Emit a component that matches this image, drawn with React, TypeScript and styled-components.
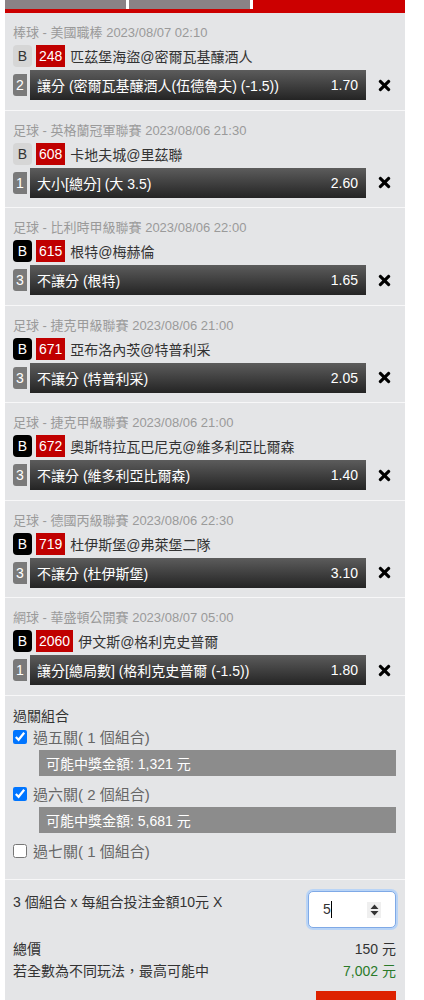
import React from "react"
import styled, { createGlobalStyle } from "styled-components"
import { FaTimes } from "react-icons/fa"

const GlobalStyle = createGlobalStyle`
  body {
    margin: 0;
    background: #fff;
    font-family: "Liberation Sans", "Noto Sans CJK TC", sans-serif;
  }
`

const Panel = styled.div`
  width: 400px;
  margin-left: 5px;
  background: #e4e5e7;
  color: #333;
  font-size: 14px;
`

const Tabs = styled.div`
  display: flex;
  gap: 3px;
  height: 9px;
  border-bottom: 4px solid #cc0000;
  background: #fff;
`

const Tab = styled.div<{ $active?: boolean }>`
  flex: ${(p) => (p.$active ? "1" : "0 0 121px")};
  background: ${(p) => (p.$active ? "#cc0000" : "#8a8286")};
`

const BetItem = styled.div`
  padding: 10px 0 9.5px 8px;
  border-bottom: 1px solid #f7f7f8;
  display: flex;
  flex-direction: column;
`

const League = styled.div`
  height: 20px;
  line-height: 20px;
  font-size: 13px;
  color: #9a9a9a;
  margin-bottom: 2px;
`

const MatchRow = styled.div`
  display: flex;
  align-items: center;
  height: 22px;
  margin-bottom: 3px;
`

const TypeBadge = styled.span<{ $dark?: boolean }>`
  width: 19px;
  height: 22px;
  border-radius: 4px;
  display: flex;
  align-items: center;
  justify-content: center;
  font-size: 14px;
  background: ${(p) => (p.$dark ? "#000" : "#d6d6d6")};
  color: ${(p) => (p.$dark ? "#fff" : "#333")};
  margin-right: 4px;
`

const GameNo = styled.span`
  height: 22px;
  padding: 0 3px;
  background: #c00000;
  color: #fff;
  display: flex;
  align-items: center;
  font-size: 14px;
  margin-right: 5px;
`

const Teams = styled.span`
  font-size: 14px;
  color: #333;
`

const PickRow = styled.div`
  display: flex;
  align-items: center;
  height: 30px;
`

const Qty = styled.span`
  width: 14px;
  height: 22px;
  border-radius: 3px 0 0 3px;
  background: #7a7a7a;
  color: #fff;
  display: flex;
  align-items: center;
  justify-content: center;
  font-size: 14px;
  margin-right: 3px;
`

const PickBar = styled.div`
  width: 336px;
  height: 30px;
  box-sizing: border-box;
  padding: 0 8px 0 7px;
  display: flex;
  align-items: center;
  justify-content: space-between;
  background: linear-gradient(#5c5c5c, #242424);
  color: #fff;
  font-size: 14px;
`

const Remove = styled.span`
  margin-left: 10px;
  display: flex;
  align-items: center;
  color: #000;
  font-size: 17px;
`

const ComboSection = styled.div`
  padding: 10px 9px 18px 8px;
  border-bottom: 1px solid #f7f7f8;
  display: flex;
  flex-direction: column;
`

const Title = styled.div`
  height: 20px;
  line-height: 20px;
  font-size: 14px;
  color: #333;
`

const CheckRow = styled.label`
  display: flex;
  align-items: center;
  height: 20px;
  gap: 6px;
  font-size: 15px;
  color: #666;
  margin-top: 8px;
  &:first-of-type {
    margin-top: 1px;
  }
`

const Check = styled.input`
  width: 14px;
  height: 14px;
  margin: 0;
`

const PrizeBox = styled.div`
  margin: 3px 0 0 26px;
  height: 26px;
  padding-left: 7px;
  display: flex;
  align-items: center;
  background: #8c8c8c;
  color: #fff;
  font-size: 14px;
`

const StakeSection = styled.div`
  padding: 11px 9px 0 8px;
  display: flex;
  flex-direction: column;
`

const StakeRow = styled.div`
  display: flex;
  justify-content: space-between;
  align-items: flex-start;
  margin-bottom: 9px;
`

const StakeText = styled.div`
  font-size: 14px;
  color: #333;
  line-height: 20px;
  padding-top: 1px;
`

const NumberBox = styled.div`
  position: relative;
  width: 88px;
  height: 37px;
  box-sizing: border-box;
  border: 1px solid #7fa9e6;
  border-radius: 5px;
  background: #fff;
  box-shadow: 0 0 0 2px #b9d4f6;
  display: flex;
  align-items: center;
  padding-left: 14px;
  font-size: 14px;
  color: #333;
`

const Caret = styled.span`
  width: 1px;
  height: 17px;
  background: #000;
`

const Spinner = styled.span`
  position: absolute;
  right: 14px;
  top: 10px;
  width: 14px;
  height: 16px;
  background: #efefef;
  display: flex;
  align-items: center;
  justify-content: center;
`

const SumRow = styled.div<{ $green?: boolean }>`
  display: flex;
  justify-content: space-between;
  height: 22px;
  align-items: center;
  font-size: 14px;
  color: #333;
  & > span:last-child {
    color: ${(p) => (p.$green ? "#2a7a2a" : "#333")};
  }
`

const ActionRow = styled.div`
  display: flex;
  justify-content: flex-end;
  margin-top: 10px;
`

const SubmitButton = styled.div`
  width: 80px;
  height: 30px;
  background: #dd2200;
`

const bets = [
  { league: "棒球 - 美國職棒 2023/08/07 02:10", dark: false, no: "248", teams: "匹茲堡海盜@密爾瓦基釀酒人", qty: 2, pick: "讓分 (密爾瓦基釀酒人(伍德魯夫) (-1.5))", odds: "1.70" },
  { league: "足球 - 英格蘭冠軍聯賽 2023/08/06 21:30", dark: false, no: "608", teams: "卡地夫城@里茲聯", qty: 1, pick: "大小[總分] (大 3.5)", odds: "2.60" },
  { league: "足球 - 比利時甲級聯賽 2023/08/06 22:00", dark: true, no: "615", teams: "根特@梅赫倫", qty: 3, pick: "不讓分 (根特)", odds: "1.65" },
  { league: "足球 - 捷克甲級聯賽 2023/08/06 21:00", dark: true, no: "671", teams: "亞布洛內茨@特普利采", qty: 3, pick: "不讓分 (特普利采)", odds: "2.05" },
  { league: "足球 - 捷克甲級聯賽 2023/08/06 21:00", dark: true, no: "672", teams: "奧斯特拉瓦巴尼克@維多利亞比爾森", qty: 3, pick: "不讓分 (維多利亞比爾森)", odds: "1.40" },
  { league: "足球 - 德國丙級聯賽 2023/08/06 22:30", dark: true, no: "719", teams: "杜伊斯堡@弗萊堡二隊", qty: 3, pick: "不讓分 (杜伊斯堡)", odds: "3.10" },
  { league: "網球 - 華盛頓公開賽 2023/08/07 05:00", dark: true, no: "2060", teams: "伊文斯@格利克史普爾", qty: 1, pick: "讓分[總局數] (格利克史普爾 (-1.5))", odds: "1.80" }
]

const combos = [
  { label: "過五關( 1 個組合)", checked: true, prize: "1,321" },
  { label: "過六關( 2 個組合)", checked: true, prize: "5,681" },
  { label: "過七關( 1 個組合)", checked: false, prize: "" }
]

const App = () => {
  return (
    <>
      <GlobalStyle />
      <Panel>
        <Tabs>
          <Tab />
          <Tab />
          <Tab $active />
        </Tabs>

        {bets.map((b) => (
          <BetItem key={b.no}>
            <League>{b.league}</League>
            <MatchRow>
              <TypeBadge $dark={b.dark}>B</TypeBadge>
              <GameNo>{b.no}</GameNo>
              <Teams>{b.teams}</Teams>
            </MatchRow>
            <PickRow>
              <Qty>{b.qty}</Qty>
              <PickBar>
                <span>{b.pick}</span>
                <span>{b.odds}</span>
              </PickBar>
              <Remove>
                <FaTimes />
              </Remove>
            </PickRow>
          </BetItem>
        ))}

        <ComboSection>
          <Title>過關組合</Title>
          {combos.map((c) => (
            <React.Fragment key={c.label}>
              <CheckRow>
                <Check type="checkbox" defaultChecked={c.checked} />
                {c.label}
              </CheckRow>
              {c.checked && <PrizeBox>可能中獎金額: {c.prize} 元</PrizeBox>}
            </React.Fragment>
          ))}
        </ComboSection>

        <StakeSection>
          <StakeRow>
            <StakeText>3 個組合 x 每組合投注金額10元 X</StakeText>
            <NumberBox>
              5
              <Caret />
              <Spinner>
                <svg width="9" height="12" viewBox="0 0 9 12">
                  <path d="M4.5 0.5 L8.5 5 L0.5 5 Z M4.5 11.5 L8.5 7 L0.5 7 Z" fill="#333" />
                </svg>
              </Spinner>
            </NumberBox>
          </StakeRow>
          <SumRow>
            <span>總價</span>
            <span>150 元</span>
          </SumRow>
          <SumRow $green>
            <span>若全數為不同玩法，最高可能中</span>
            <span>7,002 元</span>
          </SumRow>
          <ActionRow>
            <SubmitButton />
          </ActionRow>
        </StakeSection>
      </Panel>
    </>
  )
}

export default App
